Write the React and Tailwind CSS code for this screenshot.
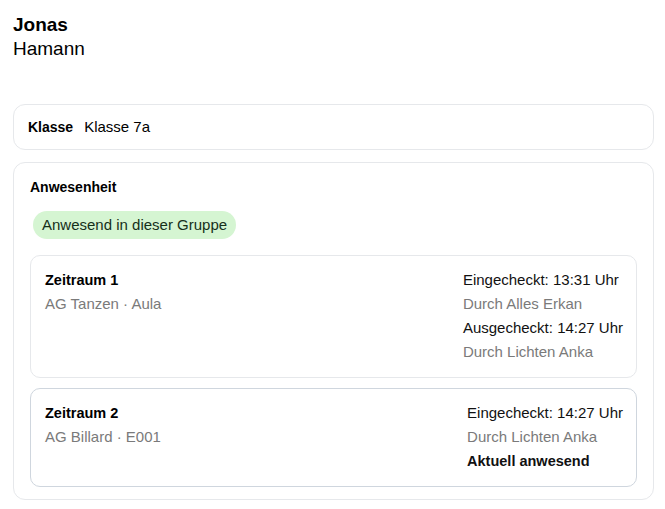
import React from "react";

const periods = [
  {
    title: "Zeitraum 1",
    place: "AG Tanzen · Aula",
    active: false,
    rows: [
      { text: "Eingecheckt: 13:31 Uhr", tone: "main" },
      { text: "Durch Alles Erkan", tone: "muted" },
      { text: "Ausgecheckt: 14:27 Uhr", tone: "main" },
      { text: "Durch Lichten Anka", tone: "muted" },
    ],
  },
  {
    title: "Zeitraum 2",
    place: "AG Billard · E001",
    active: true,
    rows: [
      { text: "Eingecheckt: 14:27 Uhr", tone: "main" },
      { text: "Durch Lichten Anka", tone: "muted" },
      { text: "Aktuell anwesend", tone: "bold" },
    ],
  },
];

const PeriodCard = ({ period }) => (
  <div
    className={
      "flex justify-between rounded-[10px] border pl-[14px] pr-[13px] pt-[14px] pb-[15px] " +
      (period.active ? "border-[#cfd6de]" : "border-[#e6e8eb]")
    }
  >
    <div className="flex flex-col gap-1">
      <span className="text-[14.5px] font-bold leading-5 text-black">{period.title}</span>
      <span className="text-[15px] leading-5 text-[#7a7a7a]">{period.place}</span>
    </div>
    <div className="flex flex-col gap-1">
      {period.rows.map((row) => (
        <span
          key={row.text}
          className={
            row.tone === "muted"
              ? "text-[15px] leading-5 text-[#7a7a7a]"
              : row.tone === "bold"
              ? "text-[14.5px] font-bold leading-5 text-[#111]"
              : "text-[15px] leading-5 text-[#111]"
          }
        >
          {row.text}
        </span>
      ))}
    </div>
  </div>
);

export default function App() {
  return (
    <div className="min-h-screen bg-white pl-[13px] pr-[11px] pt-[13px] font-['Liberation_Sans',Arial,sans-serif] text-black">
      <div className="flex flex-col">
        <span className="text-[19px] font-bold leading-6">Jonas</span>
        <span className="text-[19px] leading-6">Hamann</span>
      </div>

      <div className="mt-[43px] flex items-center gap-[11px] rounded-[12px] border border-[#e6e8eb] px-[14px] py-[14px]">
        <span className="text-[14px] font-bold leading-4">Klasse</span>
        <span className="text-[15px] leading-4">Klasse 7a</span>
      </div>

      <div className="mt-3 rounded-[12px] border border-[#e6e8eb] px-4 pb-3 pt-4">
        <h2 className="text-[14px] font-bold leading-4">Anwesenheit</h2>
        <div className="mt-4 pl-[3px]">
          <span className="inline-flex h-7 items-center rounded-full bg-[#d5f5d2] px-[9px] text-[15px] text-[#16301a]">
            Anwesend in dieser Gruppe
          </span>
        </div>
        <div className="mt-4 flex flex-col gap-[10px]">
          {periods.map((p) => (
            <PeriodCard key={p.title} period={p} />
          ))}
        </div>
      </div>
    </div>
  );
}
